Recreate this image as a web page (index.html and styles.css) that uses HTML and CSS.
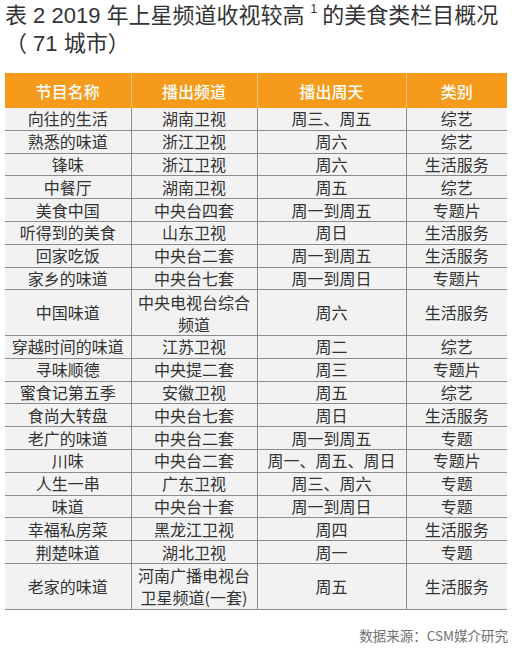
FILE: index.html
```html
<!DOCTYPE html>
<html lang="zh-CN">
<head>
<meta charset="utf-8">
<link rel="stylesheet" href="styles.css">
</head>
<body>
<div class="page">
  <h1 class="title">表 2 2019 年上星频道收视较高<sup>1</sup>的美食类栏目概况<br>（ 71 城市）</h1>
  <table class="tbl">
    <colgroup>
      <col class="c1"><col class="c2"><col class="c3"><col class="c4">
    </colgroup>
    <thead>
      <tr><th>节目名称</th><th>播出频道</th><th>播出周天</th><th>类别</th></tr>
    </thead>
    <tbody>
      <tr><td>向往的生活</td><td>湖南卫视</td><td>周三、周五</td><td>综艺</td></tr>
      <tr><td>熟悉的味道</td><td>浙江卫视</td><td>周六</td><td>综艺</td></tr>
      <tr><td>锋味</td><td>浙江卫视</td><td>周六</td><td>生活服务</td></tr>
      <tr><td>中餐厅</td><td>湖南卫视</td><td>周五</td><td>综艺</td></tr>
      <tr><td>美食中国</td><td>中央台四套</td><td>周一到周五</td><td>专题片</td></tr>
      <tr><td>听得到的美食</td><td>山东卫视</td><td>周日</td><td>生活服务</td></tr>
      <tr><td>回家吃饭</td><td>中央台二套</td><td>周一到周五</td><td>生活服务</td></tr>
      <tr><td>家乡的味道</td><td>中央台七套</td><td>周一到周日</td><td>专题片</td></tr>
      <tr class="dbl"><td>中国味道</td><td><span class="ln">中央电视台综合</span><span class="ln">频道</span></td><td>周六</td><td>生活服务</td></tr>
      <tr><td>穿越时间的味道</td><td>江苏卫视</td><td>周二</td><td>综艺</td></tr>
      <tr><td>寻味顺德</td><td>中央提二套</td><td>周三</td><td>专题片</td></tr>
      <tr><td>蜜食记第五季</td><td>安徽卫视</td><td>周五</td><td>综艺</td></tr>
      <tr><td>食尚大转盘</td><td>中央台七套</td><td>周日</td><td>生活服务</td></tr>
      <tr><td>老广的味道</td><td>中央台二套</td><td>周一到周五</td><td>专题</td></tr>
      <tr><td>川味</td><td>中央台二套</td><td>周一、周五、周日</td><td>专题片</td></tr>
      <tr><td>人生一串</td><td>广东卫视</td><td>周三、周六</td><td>专题</td></tr>
      <tr><td>味道</td><td>中央台十套</td><td>周一到周日</td><td>专题</td></tr>
      <tr><td>幸福私房菜</td><td>黑龙江卫视</td><td>周四</td><td>生活服务</td></tr>
      <tr><td>荆楚味道</td><td>湖北卫视</td><td>周一</td><td>专题</td></tr>
      <tr class="dbl"><td>老家的味道</td><td><span class="ln">河南广播电视台</span><span class="ln">卫星频道(一套)</span></td><td>周五</td><td>生活服务</td></tr>
    </tbody>
  </table>
  <p class="source">数据来源：CSM媒介研究</p>
</div>
</body>
</html>
```
FILE: styles.css
```css
html, body {
  margin: 0;
  padding: 0;
  background: #ffffff;
}
.page {
  width: 512px;
  height: 648px;
  overflow: hidden;
  font-family: "Noto Sans CJK SC", "Noto Sans", sans-serif;
  color: #333333;
}
.title {
  margin: 0;
  padding: 2px 0 0 5px;
  font-family: "Liberation Sans", "Noto Sans CJK SC", sans-serif;
  font-size: 22px;
  line-height: 28px;
  font-weight: 400;
  color: #333333;
  white-space: nowrap;
}
.title sup {
  font-size: 12px;
  line-height: 0;
  vertical-align: 10px;
  margin: 0 5px 0 6px;
}
.tbl {
  margin: 15px 0 0 5px;
  width: 502px;
  border-collapse: collapse;
  table-layout: fixed;
}
.c1 { width: 126px; }
.c2 { width: 126px; }
.c3 { width: 149px; }
.c4 { width: 101px; }
.tbl th {
  background: #f59a1a;
  color: #ffffff;
  font-size: 16px;
  font-weight: 500;
  height: 35px;
  padding: 0;
  text-align: center;
  border-left: 1px solid #f8c27a;
}
.tbl th:first-child { border-left: none; }
.tbl td {
  background: #f2f2f2;
  font-size: 16px;
  line-height: 19px;
  height: 21.8px;
  padding: 0;
  text-align: center;
  color: #333333;
  border-top: 1px solid #8c8c8c;
  border-left: 1px solid #8c8c8c;
  white-space: nowrap;
}
.tbl td:first-child { border-left: none; }
.tbl tbody tr:first-child td { border-top: none; }
.tbl tbody tr:last-child td { border-bottom: 1px solid #8c8c8c; }
.tbl tr.dbl td {
  height: 44.6px;
}
.ln {
  display: block;
  height: 22px;
  line-height: 22px;
  overflow: visible;
}
.source {
  margin: 16px 4px 0 0;
  text-align: right;
  font-size: 13.5px;
  line-height: 18px;
  color: #707070;
}
```
